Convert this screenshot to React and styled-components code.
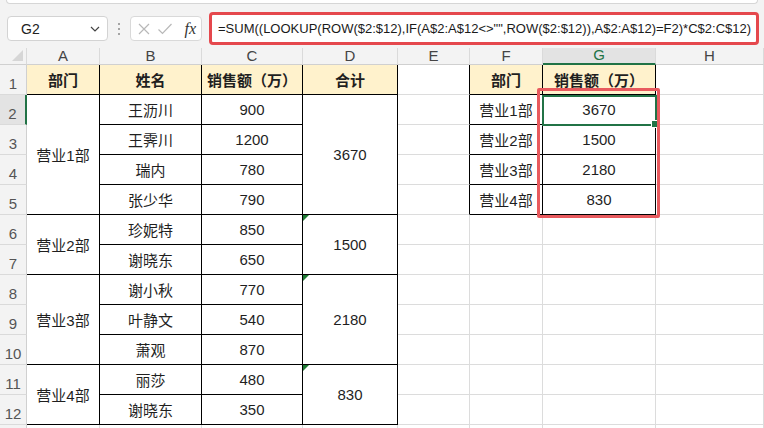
import React from "react";
import styled, { createGlobalStyle } from "styled-components";

const GlobalStyle = createGlobalStyle`
  html, body { margin: 0; padding: 0; background: #ffffff; }
  body { font-family: "Liberation Sans", "Noto Sans CJK SC", sans-serif; }
  * { box-sizing: border-box; }
`;

const Page = styled.div`
  width: 764px;
  height: 428px;
  overflow: hidden;
  background: #f3f3f3;
  display: flex;
  flex-direction: column;
`;

const RibbonEdge = styled.div`
  flex-shrink: 0;
  height: 4px;
  margin: 0 6px;
  background: #ffffff;
  border: 1px solid #d6d6d6;
  border-top: none;
  border-radius: 0 0 6px 6px;
`;

const FormulaRow = styled.div`
  flex-shrink: 0;
  height: 43px;
  display: flex;
  align-items: center;
  padding: 6px 0 0 7px;
`;

const NameBox = styled.div`
  width: 101px;
  height: 25px;
  background: #fff;
  border: 1px solid #d3d3d3;
  border-radius: 4px;
  display: flex;
  align-items: center;
  justify-content: space-between;
  padding: 0 6px 0 6px;
  font-size: 14px;
  color: #222;
`;

const NameText = styled.span`
  padding-left: 7px;
`;

const Dots = styled.div`
  width: 22px;
  display: flex;
  flex-direction: column;
  align-items: center;
  gap: 3px;
  & > span {
    width: 2px;
    height: 2px;
    border-radius: 1px;
    background: #8a8a8a;
  }
`;

const FxBox = styled.div`
  width: 72px;
  height: 25px;
  background: #fff;
  border: 1px solid #d9d9d9;
  border-radius: 4px;
  display: flex;
  align-items: center;
  padding: 0 5px 0 6px;
  gap: 6px;
`;

const FxText = styled.span`
  margin-left: auto;
  font-family: "Liberation Serif", "DejaVu Serif", serif;
  font-style: italic;
  font-size: 16px;
  color: #333;
`;

const FormulaBox = styled.div`
  margin-left: 7px;
  width: 550px;
  height: 33px;
  background: #fff;
  border: 3px solid #e5484d;
  border-radius: 4px;
  display: flex;
  align-items: center;
  padding-left: 6px;
  font-size: 13px;
  letter-spacing: 0;
  color: #1a1a1a;
  white-space: nowrap;
  overflow: hidden;
`;

const SheetWrap = styled.div`
  position: relative;
  margin-top: 1px;
  flex-shrink: 0;
  background: #fff;
`;

const Sheet = styled.div`
  display: grid;
  grid-template-columns: 27px 73px 102px 101px 95px 72px 73px 113px 1fr;
  grid-template-rows: 17px repeat(13, 30px);
`;

const Corner = styled.div`
  grid-column: 1;
  grid-row: 1;
  background: #f3f3f3;
  border-right: 1px solid #dadada;
  border-bottom: 1px solid #d0d0d0;
  position: relative;
  &::after {
    content: "";
    position: absolute;
    right: 3px;
    bottom: 3px;
    width: 0;
    height: 0;
    border-left: 11px solid transparent;
    border-bottom: 11px solid #d6d6d6;
  }
`;

const ColHead = styled.div`
  grid-column: ${(p) => p.$c};
  grid-row: 1;
  background: ${(p) => (p.$sel ? "#e3e3e3" : "#f3f3f3")};
  border-right: 1px solid #dadada;
  border-bottom: ${(p) => (p.$sel ? "2px solid #217346" : "1px solid #d0d0d0")};
  color: ${(p) => (p.$sel ? "#217346" : "#444")};
  font-size: 15px;
  display: flex;
  align-items: flex-end;
  justify-content: center;
  line-height: 16px;
`;

const RowHead = styled.div`
  grid-column: 1;
  grid-row: ${(p) => p.$r};
  background: ${(p) => (p.$sel ? "#e3e3e3" : "#f3f3f3")};
  border-right: ${(p) => (p.$sel ? "2px solid #217346" : "1px solid #d0d0d0")};
  border-bottom: 1px solid #dadada;
  color: #555;
  font-size: 15px;
  display: flex;
  align-items: flex-end;
  justify-content: center;
  padding-bottom: 2px;
`;

const Cell = styled.div`
  grid-column: ${(p) => p.$c};
  grid-row: ${(p) => p.$r} / span ${(p) => p.$rs || 1};
  position: relative;
  background: ${(p) => (p.$head ? "#fff2cc" : "#ffffff")};
  border-right: 1px solid ${(p) => (p.$br ? "#000" : "#dcdcdc")};
  border-bottom: 1px solid ${(p) => (p.$bb ? "#000" : "#dcdcdc")};
  font-weight: ${(p) => (p.$head ? 700 : 400)};
  font-size: 15px;
  color: #1f1f1f;
  display: flex;
  align-items: center;
  justify-content: center;
  white-space: nowrap;
  ${(p) =>
    p.$flag
      ? `&::before {
    content: "";
    position: absolute;
    left: 0;
    top: 0;
    border-top: 6px solid #1e7b34;
    border-right: 6px solid transparent;
  }`
      : ""}
`;

const Selection = styled.div`
  position: absolute;
  left: 542px;
  top: 47px;
  width: 115px;
  height: 31px;
  border: 2px solid #217346;
  pointer-events: none;
  &::after {
    content: "";
    position: absolute;
    right: -4px;
    bottom: -4px;
    width: 6px;
    height: 6px;
    background: #217346;
    border: 1px solid #fff;
  }
`;

const Highlight = styled.div`
  position: absolute;
  left: 537px;
  top: 40px;
  width: 123px;
  height: 130px;
  border: 3px solid #e85a5e;
  border-radius: 2px;
  pointer-events: none;
`;

const cols = ["A", "B", "C", "D", "E", "F", "G", "H"];

const people = [
  ["王沥川", 900],
  ["王霁川", 1200],
  ["瑞内", 780],
  ["张少华", 790],
  ["珍妮特", 850],
  ["谢晓东", 650],
  ["谢小秋", 770],
  ["叶静文", 540],
  ["萧观", 870],
  ["丽莎", 480],
  ["谢晓东", 350],
];

const groups = [
  { name: "营业1部", start: 2, span: 4, total: 3670, flag: false },
  { name: "营业2部", start: 6, span: 2, total: 1500, flag: true },
  { name: "营业3部", start: 8, span: 3, total: 2180, flag: true },
  { name: "营业4部", start: 11, span: 2, total: 830, flag: true },
];

const summary = [
  ["营业1部", 3670],
  ["营业2部", 1500],
  ["营业3部", 2180],
  ["营业4部", 830],
];

const gr = (n) => n + 1;

export default function App() {
  const cells = [];

  const heads = { 2: "部门", 3: "姓名", 4: "销售额（万）", 5: "合计", 7: "部门", 8: "销售额（万）" };
  for (let c = 2; c <= 9; c++) {
    const h = heads[c];
    cells.push(
      <Cell
        key={`h${c}`}
        $c={c}
        $r={gr(1)}
        $head={!!h}
        $br={c >= 2 && c <= 8}
        $bb={(c >= 2 && c <= 5) || c === 7 || c === 8}
      >
        {h || ""}
      </Cell>
    );
  }

  groups.forEach((g) => {
    cells.push(
      <Cell key={`a${g.start}`} $c={2} $r={gr(g.start)} $rs={g.span} $br $bb>
        {g.name}
      </Cell>
    );
    cells.push(
      <Cell key={`d${g.start}`} $c={5} $r={gr(g.start)} $rs={g.span} $br $bb $flag={g.flag}>
        {g.total}
      </Cell>
    );
  });
  people.forEach(([n, v], i) => {
    const row = i + 2;
    cells.push(
      <Cell key={`b${row}`} $c={3} $r={gr(row)} $br $bb>
        {n}
      </Cell>
    );
    cells.push(
      <Cell key={`c${row}`} $c={4} $r={gr(row)} $br $bb>
        {v}
      </Cell>
    );
  });

  for (let row = 2; row <= 13; row++) {
    const inRight = row <= 5;
    cells.push(<Cell key={`e${row}`} $c={6} $r={gr(row)} $br={inRight} />);
    if (inRight) {
      const [n, v] = summary[row - 2];
      cells.push(
        <Cell key={`f${row}`} $c={7} $r={gr(row)} $br $bb>
          {n}
        </Cell>
      );
      cells.push(
        <Cell key={`g${row}`} $c={8} $r={gr(row)} $br $bb>
          {v}
        </Cell>
      );
    } else {
      cells.push(<Cell key={`f${row}`} $c={7} $r={gr(row)} />);
      cells.push(<Cell key={`g${row}`} $c={8} $r={gr(row)} />);
    }
    cells.push(<Cell key={`hh${row}`} $c={9} $r={gr(row)} />);
    if (row === 13) {
      for (let c = 2; c <= 5; c++) cells.push(<Cell key={`z${c}`} $c={c} $r={gr(13)} />);
    }
  }

  return (
    <>
      <GlobalStyle />
      <Page>
        <RibbonEdge />
        <FormulaRow>
          <NameBox>
            <NameText>G2</NameText>
            <svg width="12" height="12" viewBox="0 0 12 12">
              <path d="M2 4 L6 8 L10 4" fill="none" stroke="#444" strokeWidth="1.2" />
            </svg>
          </NameBox>
          <Dots>
            <span />
            <span />
            <span />
          </Dots>
          <FxBox>
            <svg width="14" height="14" viewBox="0 0 14 14">
              <path d="M2 2 L12 12 M12 2 L2 12" stroke="#b8b8b8" strokeWidth="1.2" />
            </svg>
            <svg width="16" height="14" viewBox="0 0 16 14">
              <path d="M1.5 7.5 L5.5 11.5 L14.5 2" fill="none" stroke="#b8b8b8" strokeWidth="1.2" />
            </svg>
            <FxText>fx</FxText>
          </FxBox>
          <FormulaBox>
            {'=SUM((LOOKUP(ROW($2:$12),IF(A$2:A$12<>"",ROW($2:$12)),A$2:A$12)=F2)*C$2:C$12)'}
          </FormulaBox>
        </FormulaRow>
        <SheetWrap>
          <Sheet>
            <Corner />
            {cols.map((l, i) => (
              <ColHead key={l} $c={i + 2} $sel={l === "G"}>
                {l}
              </ColHead>
            ))}
            {Array.from({ length: 13 }, (_, i) => (
              <RowHead key={i} $r={gr(i + 1)} $sel={i + 1 === 2}>
                {i + 1 <= 12 ? i + 1 : ""}
              </RowHead>
            ))}
            {cells}
          </Sheet>
          <Selection />
          <Highlight />
        </SheetWrap>
      </Page>
    </>
  );
}
